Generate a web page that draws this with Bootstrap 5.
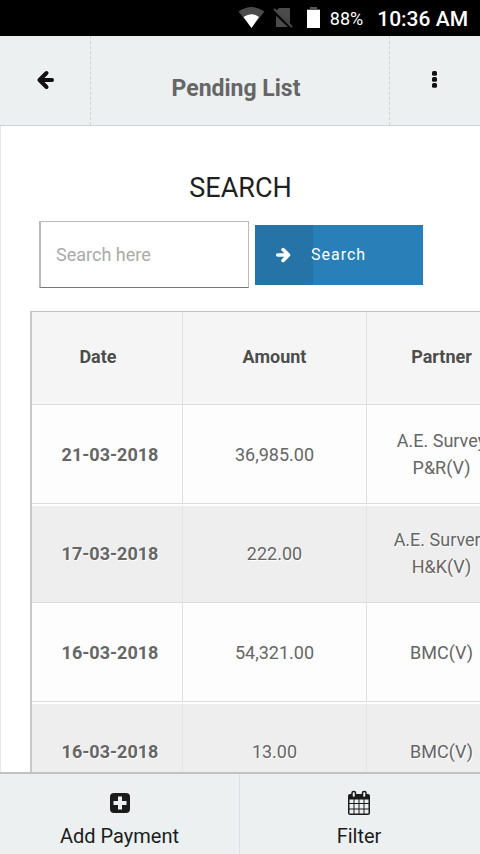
<!DOCTYPE html>
<html lang="en">
<head>
<meta charset="utf-8">
<meta name="viewport" content="width=device-width, initial-scale=1">
<title>Pending List</title>
<link rel="stylesheet" href="https://cdn.jsdelivr.net/npm/bootstrap@5.3.0/dist/css/bootstrap.min.css">
<style>
  body { font-family: Roboto, sans-serif; color: #1f1f1f; background: #fff; }
  .status-bar { height: 36px; background: #000; color: #fff; padding: 2px 12px 0 0; }
  .status-pct { font-size: 18px; line-height: 34px; margin-right: 14px; margin-left: 8px; }
  .status-clock { font-size: 21px; line-height: 34px; font-weight: 500; }
  .status-bar svg { margin-bottom: 2px; }
  .top-bar { height: 90px; background: #ecf0f1; border-bottom: 1px solid #ccd3d6; }
  .top-btn { width: 91px; border: 0; border-radius: 0; color: #111; padding-bottom: 8px; }
  .top-btn.back { border-right: 1px dashed #ced2d4; }
  .top-btn.more { border-left: 1px dashed #ced2d4; padding-bottom: 10px; }
  .page-title { font-size: 23px; line-height: 28px; font-weight: 700; color: #666; padding: 16px 8px 0 0; }
  .content-area { min-height: 0; border-left: 1px solid #e6e6e6; }
  .search-title { font-size: 27px; line-height: 32px; font-weight: 400; margin: 46px 0 17px; }
  .search-form { padding-left: 38px; gap: 6px; margin-bottom: 23px; }
  .search-input { width: 210px; height: 67px; font-size: 18px; padding: 0 15px; border: 1px solid #bbb; border-left: 2px solid #bbb; border-bottom-color: #777; border-radius: 0; }
  .search-input::placeholder { color: #aaa; }
  .search-btn { width: 168px; height: 60px; border: 0; border-radius: 0; background: #2980b9; color: #fff; font-size: 16px; letter-spacing: 1px; padding: 0; }
  .search-btn:hover { background: #2980b9; color: #fff; }
  .search-btn-icon { width: 58px; background: #2573a7; }
  .search-btn-text { line-height: 60px; margin-left: -2px; }
  .list-wrap { margin-left: 29px; }
  .pay-table { width: 488px; table-layout: fixed; border-collapse: separate; border-spacing: 0; border: 1px solid #c4c4c4; border-left: 2px solid #c9c9c9; color: #666; font-size: 18px; line-height: 27px; text-align: center; text-shadow: 1px 1px 0 #fff; }
  .pay-table th, .pay-table td { vertical-align: middle; padding: 0 20px; border-bottom: 1px solid #dcdcdc; border-right: 1px solid #e0e0e0; }
  .pay-table .date-cell { padding: 0 18px 0 24px; }
  .pay-table thead th { height: 93px; padding: 0 18px 4px; background: #f5f5f5; color: #4d4d4d; }
  .pay-table thead .date-cell { padding: 0 18px 4px 0; }
  .pay-table tbody tr > * { height: 99px; background: #fdfdfd; }
  .pay-table tbody tr:nth-child(even) > * { background: #eee; border-top: 2px solid #fff; padding-bottom: 2px; border-right-color: #e5e5e5; }
  .col-date { width: 151px; }
  .col-amount { width: 184px; }
  .bottom-bar { height: 82px; background: #ecf0f1; border-top: 2px solid #bfc1c3; padding-right: 2px; }
  .bottom-link { color: #1c1c1c; font-size: 20px; line-height: 24px; padding-top: 16px; gap: 8px; }
  .bottom-link + .bottom-link { border-left: 1px solid #dde1e4; }
  .bottom-link svg { height: 26px; width: 26px; }
</style>
<script src="https://cdn.jsdelivr.net/npm/bootstrap@5.3.0/dist/js/bootstrap.bundle.min.js"></script>
</head>
<body class="vh-100 d-flex flex-column overflow-hidden">
  <div class="status-bar d-flex align-items-center justify-content-end flex-shrink-0">
    <svg width="84" height="24" viewBox="0 0 84 24" aria-hidden="true">
      <path d="M0.500 5.500Q13.500-3.500 26.500 5.500L13.500 22Z" fill="#4b4b4b"/>
      <path d="M5.500 11Q13.500 5.500 21 11L13.500 22Z" fill="#fff"/>
      <path d="M38 5l3-3h11v19H38z" fill="#4b4b4b"/>
      <path d="M35 4l19 18" stroke="#000" stroke-width="4"/>
      <path d="M36 3l18 18" stroke="#4b4b4b" stroke-width="2"/>
      <path d="M69 4h3V1h7v3h3v18H69z" fill="#fff"/>
      <path d="M69 2h13M69 1h13v3H69z" fill="#555"/>
      <path d="M69 0h3v3h-3zM79 0h3v3h-3z" fill="#000"/>
    </svg>
    <span class="status-pct">88%</span>
    <span class="status-clock">10:36 AM</span>
  </div>

  <header class="top-bar d-flex flex-shrink-0">
    <button type="button" class="top-btn back btn d-flex align-items-center justify-content-center" aria-label="Back">
      <svg width="20" height="20" viewBox="0 0 20 20" fill="none" stroke="currentColor" stroke-width="4" stroke-linecap="round" stroke-linejoin="round"><path d="M11.500 3L4.500 10l7 7M5 10h12"/></svg>
    </button>
    <div class="flex-grow-1 d-flex align-items-center justify-content-center">
      <h1 class="page-title m-0">Pending List</h1>
    </div>
    <button type="button" class="top-btn more btn d-flex align-items-center justify-content-center" aria-label="More options">
      <svg width="6" height="18" viewBox="0 0 6 18" fill="currentColor"><rect x="0" y="1" width="5" height="4.800" rx="1.500"/><rect x="0" y="7" width="5" height="4.800" rx="1.500"/><rect x="0" y="13" width="5" height="4.800" rx="1.500"/></svg>
    </button>
  </header>

  <main class="content-area flex-grow-1 overflow-hidden">
    <h2 class="search-title text-center">SEARCH</h2>
    <form class="search-form d-flex align-items-center">
      <input type="search" class="search-input form-control flex-shrink-0" placeholder="Search here" aria-label="Search here">
      <button type="button" class="search-btn btn d-flex align-items-stretch">
        <span class="search-btn-icon d-flex align-items-center justify-content-center">
          <svg width="18" height="18" viewBox="0 0 20 20" fill="none" stroke="currentColor" stroke-width="4" stroke-linecap="round" stroke-linejoin="round" aria-hidden="true"><path d="M9 4l6 6-6 6M15 10H3"/></svg>
        </span>
        <span class="search-btn-text">Search</span>
      </button>
    </form>
    <div class="list-wrap">
      <table class="pay-table">
        <colgroup><col class="col-date"><col class="col-amount"><col></colgroup>
        <thead>
          <tr><th scope="col" class="date-cell">Date</th><th scope="col">Amount</th><th scope="col">Partner</th></tr>
        </thead>
        <tbody>
          <tr><th scope="row" class="date-cell">21-03-2018</th><td>36,985.00</td><td>A.E. Survey<br>P&amp;R(V)</td></tr>
          <tr><th scope="row" class="date-cell">17-03-2018</th><td>222.00</td><td>A.E. Survery<br>H&amp;K(V)</td></tr>
          <tr><th scope="row" class="date-cell">16-03-2018</th><td>54,321.00</td><td>BMC(V)</td></tr>
          <tr><th scope="row" class="date-cell">16-03-2018</th><td>13.00</td><td>BMC(V)</td></tr>
        </tbody>
      </table>
    </div>
  </main>

  <nav class="bottom-bar d-flex flex-shrink-0" aria-label="Actions">
    <a href="#" class="bottom-link w-50 d-flex flex-column align-items-center text-decoration-none">
      <svg viewBox="0 0 26 26" aria-hidden="true"><rect x="3" y="3" width="20" height="20" rx="4" fill="#1b1b1b"/><path d="M13 6.500v13M6.500 13h13" stroke="#ecf0f1" stroke-width="4"/></svg>
      <span>Add Payment</span>
    </a>
    <a href="#" class="bottom-link w-50 d-flex flex-column align-items-center text-decoration-none">
      <svg viewBox="0 0 26 26" aria-hidden="true">
        <rect x="2" y="4" width="22" height="21" rx="2" fill="#1b1b1b"/>
        <path d="M3.500 9.500h4v3.500h-4zM8.500 9.500h4v3.500h-4zM13.500 9.500h4v3.500h-4zM18.500 9.500h4v3.500h-4zM3.500 14h4v4.500h-4zM8.500 14h4v4.500h-4zM13.500 14h4v4.500h-4zM18.500 14h4v4.500h-4zM3.500 19.500h4v4h-4zM8.500 19.500h4v4h-4zM13.500 19.500h4v4h-4zM18.500 19.500h4v4h-4z" fill="#ecf0f1"/>
        <rect x="6" y="1.500" width="3.500" height="6" rx="1.500" fill="#ecf0f1" stroke="#1b1b1b" stroke-width="1.500"/>
        <rect x="16.500" y="1.500" width="3.500" height="6" rx="1.500" fill="#ecf0f1" stroke="#1b1b1b" stroke-width="1.500"/>
      </svg>
      <span>Filter</span>
    </a>
  </nav>
</body>
</html>
